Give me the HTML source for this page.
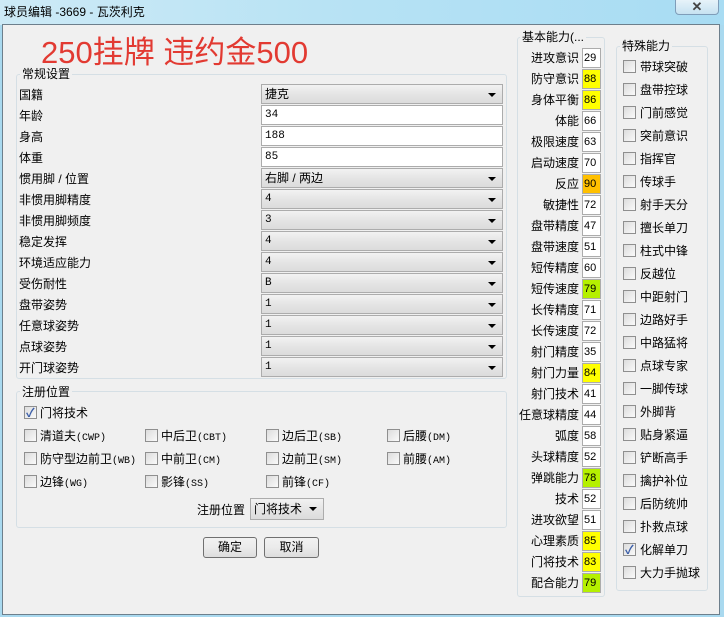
<!DOCTYPE html>
<html><head><meta charset="utf-8"><style>
*{box-sizing:border-box;margin:0;padding:0}
body{width:724px;height:617px;overflow:hidden;background:#a9d9ef;font-family:"Liberation Sans","Noto Sans CJK SC",sans-serif;font-size:12px;color:#000;position:relative}
.a{position:absolute}
#tb{left:0;top:0;width:724px;height:25px;background:linear-gradient(90deg,#cdeaf6,#b6e2f4 50%,#a8dcf3);}
#client{left:2px;top:24px;width:718px;height:591px;background:#f0f0f0;border:1px solid #6d7f8c}
.grp{position:absolute;border:1px solid #d5dfe5;border-radius:3px}
.gt{position:absolute;background:#f0f0f0;padding:0 2px;font-size:12px;line-height:14px}
.lab{position:absolute;left:19px;font-size:12px;line-height:14px}
.inp{position:absolute;left:261px;width:242px;height:20px;background:#fff;border:1px solid #acacac;font-family:"Liberation Mono",monospace;font-size:11px;line-height:18px;padding-left:3px}
.sel{background:linear-gradient(#f2f2f2,#e5e5e5 50%,#dcdcdc);border-color:#acacac;font-family:"Liberation Sans","Noto Sans CJK SC",sans-serif;font-size:12px}
.sel.m{font-family:"Liberation Mono",monospace;font-size:11px}
.sel:after{content:"";position:absolute;right:6px;top:8px;border:4px solid transparent;border-top:4px solid #000;border-bottom:0}
.cb{position:absolute;width:13px;height:13px;border:1px solid #8f8f8f;background:linear-gradient(135deg,#dcdcdc,#fafafa)}
.ck:after{content:"✓";position:absolute;left:1px;top:-3px;font-size:12px;color:#3b5ea8;font-weight:bold}
.t{position:absolute;font-size:12px;line-height:14px;white-space:nowrap}
.mono{font-family:"Liberation Mono",monospace;font-size:10px}
.bv{position:absolute;left:582px;width:19px;height:20px;border:1px solid #acacac;background:#fff;font-size:11px;line-height:18px;padding-left:1px}
.y{background:#ffff00}.o{background:#ffc000}.g{background:#b5f000}
.btn{position:absolute;height:21px;border:1px solid #707070;border-radius:3px;background:linear-gradient(#f2f2f2,#ebebeb 50%,#dddddd);text-align:center;line-height:19px}
</style></head><body>
<div class="a" id="tb"></div>
<div class="t" style="left:4px;top:5px;color:#000">球员编辑 -3669 - 瓦茨利克</div>
<div class="a" style="left:675px;top:-2px;width:44px;height:17px;border:1px solid #7f9db9;border-radius:0 0 4px 4px;background:linear-gradient(#e9f4fa,#c6e2f1);text-align:center;font-size:13px;font-weight:bold;color:#444;line-height:16px">✕</div>
<div class="a" id="client"></div>
<div class="t" style="left:41px;top:35px;font-size:31px;line-height:36px;color:#e23a32;font-weight:normal">250挂牌 违约金500</div>

<div class="grp" style="left:16px;top:74px;width:491px;height:305px"></div>
<div class="gt" style="left:20px;top:67px">常规设置</div>

<div class="lab" style="top:88px">国籍</div><div class="inp sel" style="top:84px">捷克</div>
<div class="lab" style="top:109px">年龄</div><div class="inp" style="top:105px">34</div>
<div class="lab" style="top:130px">身高</div><div class="inp" style="top:126px">188</div>
<div class="lab" style="top:151px">体重</div><div class="inp" style="top:147px">85</div>
<div class="lab" style="top:172px">惯用脚 / 位置</div><div class="inp sel" style="top:168px">右脚 / 两边</div>
<div class="lab" style="top:193px">非惯用脚精度</div><div class="inp sel m" style="top:189px">4</div>
<div class="lab" style="top:214px">非惯用脚频度</div><div class="inp sel m" style="top:210px">3</div>
<div class="lab" style="top:235px">稳定发挥</div><div class="inp sel m" style="top:231px">4</div>
<div class="lab" style="top:256px">环境适应能力</div><div class="inp sel m" style="top:252px">4</div>
<div class="lab" style="top:277px">受伤耐性</div><div class="inp sel m" style="top:273px">B</div>
<div class="lab" style="top:298px">盘带姿势</div><div class="inp sel m" style="top:294px">1</div>
<div class="lab" style="top:319px">任意球姿势</div><div class="inp sel m" style="top:315px">1</div>
<div class="lab" style="top:340px">点球姿势</div><div class="inp sel m" style="top:336px">1</div>
<div class="lab" style="top:361px">开门球姿势</div><div class="inp sel m" style="top:357px">1</div>

<div class="grp" style="left:16px;top:391px;width:491px;height:137px"></div>
<div class="gt" style="left:20px;top:385px">注册位置</div>
<div class="cb ck" style="left:24px;top:406px"></div><div class="t" style="left:40px;top:406px">门将技术</div>
<div class="cb" style="left:24px;top:429px"></div><div class="t" style="left:40px;top:429px">清道夫<span class="mono">(CWP)</span></div>
<div class="cb" style="left:145px;top:429px"></div><div class="t" style="left:161px;top:429px">中后卫<span class="mono">(CBT)</span></div>
<div class="cb" style="left:266px;top:429px"></div><div class="t" style="left:282px;top:429px">边后卫<span class="mono">(SB)</span></div>
<div class="cb" style="left:387px;top:429px"></div><div class="t" style="left:403px;top:429px">后腰<span class="mono">(DM)</span></div>
<div class="cb" style="left:24px;top:452px"></div><div class="t" style="left:40px;top:452px">防守型边前卫<span class="mono">(WB)</span></div>
<div class="cb" style="left:145px;top:452px"></div><div class="t" style="left:161px;top:452px">中前卫<span class="mono">(CM)</span></div>
<div class="cb" style="left:266px;top:452px"></div><div class="t" style="left:282px;top:452px">边前卫<span class="mono">(SM)</span></div>
<div class="cb" style="left:387px;top:452px"></div><div class="t" style="left:403px;top:452px">前腰<span class="mono">(AM)</span></div>
<div class="cb" style="left:24px;top:475px"></div><div class="t" style="left:40px;top:475px">边锋<span class="mono">(WG)</span></div>
<div class="cb" style="left:145px;top:475px"></div><div class="t" style="left:161px;top:475px">影锋<span class="mono">(SS)</span></div>
<div class="cb" style="left:266px;top:475px"></div><div class="t" style="left:282px;top:475px">前锋<span class="mono">(CF)</span></div>
<div class="t" style="left:197px;top:503px">注册位置</div>
<div class="inp sel" style="left:250px;top:498px;width:74px;height:22px;line-height:20px">门将技术</div>

<div class="btn" style="left:203px;top:537px;width:54px">确定</div>
<div class="btn" style="left:264px;top:537px;width:55px">取消</div>

<div class="grp" style="left:517px;top:37px;width:88px;height:560px"></div>
<div class="gt" style="left:520px;top:30px">基本能力(...</div>
<div id="ba"></div>

<div class="grp" style="left:616px;top:46px;width:92px;height:545px"></div>
<div class="gt" style="left:620px;top:39px">特殊能力</div>
<div id="sa"></div>

<script>
var b=[["进攻意识","29",""],["防守意识","88","y"],["身体平衡","86","y"],["体能","66",""],["极限速度","63",""],["启动速度","70",""],["反应","90","o"],["敏捷性","72",""],["盘带精度","47",""],["盘带速度","51",""],["短传精度","60",""],["短传速度","79","g"],["长传精度","71",""],["长传速度","72",""],["射门精度","35",""],["射门力量","84","y"],["射门技术","41",""],["任意球精度","44",""],["弧度","58",""],["头球精度","52",""],["弹跳能力","78","g"],["技术","52",""],["进攻欲望","51",""],["心理素质","85","y"],["门将技术","83","y"],["配合能力","79","g"]];
var h="";b.forEach(function(r,i){var y=48+i*21;h+='<div class="t" style="left:500px;width:79px;text-align:right;top:'+(y+3)+'px">'+r[0]+'</div><div class="bv '+r[2]+'" style="top:'+y+'px">'+r[1]+'</div>';});
document.getElementById("ba").innerHTML=h;
var s=["带球突破","盘带控球","门前感觉","突前意识","指挥官","传球手","射手天分","擅长单刀","柱式中锋","反越位","中距射门","边路好手","中路猛将","点球专家","一脚传球","外脚背","贴身紧逼","铲断高手","擒护补位","后防统帅","扑救点球","化解单刀","大力手抛球"];
h="";s.forEach(function(r,i){var y=60+i*23;h+='<div class="cb'+(i==21?' ck':'')+'" style="left:623px;top:'+y+'px"></div><div class="t" style="left:640px;top:'+y+'px">'+r+'</div>';});
document.getElementById("sa").innerHTML=h;
</script>
</body></html>
